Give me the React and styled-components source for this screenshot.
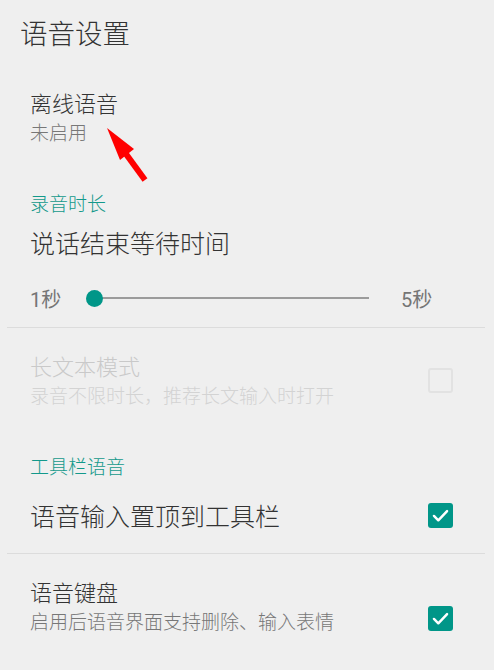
import React from "react";
import styled, { createGlobalStyle } from "styled-components";

const GlobalStyle = createGlobalStyle`
  html, body {
    margin: 0;
    padding: 0;
    background: #efefef;
  }
  body {
    font-family: "Noto Sans CJK SC", "Noto Sans", sans-serif;
    font-weight: 300;
    color: #333;
  }
`;

const Page = styled.div`
  width: 494px;
  min-height: 670px;
  background: #efefef;
  overflow: hidden;
`;

const Header = styled.h1`
  margin: 0;
  height: 65px;
  line-height: 65px;
  padding-left: 20px;
  font-size: 27.5px;
  font-weight: 300;
  color: #333;
`;

const Category = styled.div`
  padding: 20px 0 0 30px;
  line-height: 28px;
  font-size: 19px;
  color: #13998b;
`;

const Item = styled.div`
  position: relative;
  display: flex;
  align-items: center;
  padding: ${(p) => (p.$single ? "18px 41px 21px 30px" : "23px 41px 23px 30px")};
`;

const ItemText = styled.div`
  flex: 1;
`;

const Title = styled.div`
  font-size: ${(p) => (p.$big ? "25px" : "22px")};
  line-height: ${(p) => (p.$big ? "34px" : "29px")};
  color: ${(p) => (p.$disabled ? "#c9c9c9" : "#333")};
`;

const Summary = styled.div`
  font-size: 19px;
  line-height: 29px;
  color: ${(p) => (p.$disabled ? "#d3d3d3" : "#777")};
`;

const PlainTitle = styled(Title)`
  padding: 8px 0 0 30px;
`;

const SliderRow = styled.div`
  display: flex;
  align-items: center;
  height: 38px;
  margin-top: 20px;
  padding-left: 30px;
`;

const SliderLabel = styled.span`
  font-family: Roboto, "Noto Sans CJK SC", sans-serif;
  font-weight: 400;
  font-size: 20px;
  color: #757575;
  width: ${(p) => p.$w || "auto"};
`;

const Track = styled.div`
  position: relative;
  width: 275px;
  height: 2px;
  margin: 0 32px 0 8px;
  background: #9b9b9b;
`;

const Thumb = styled.div`
  position: absolute;
  left: -8px;
  top: -7.5px;
  width: 17px;
  height: 17px;
  border-radius: 50%;
  background: #009688;
`;

const Divider = styled.hr`
  margin: ${(p) => p.$top || 0}px 9px 0 7px;
  border: 0;
  height: 1px;
  background: #dcdcdc;
`;

const Box = styled.div`
  flex: none;
  width: 25px;
  height: 25px;
  box-sizing: border-box;
  border-radius: 3px;
  display: flex;
  align-items: center;
  justify-content: center;
  margin-top: ${(p) => p.$offset || 0}px;
  background: ${(p) => (p.$checked ? "#009688" : "transparent")};
  border: ${(p) => (p.$checked ? "none" : "2px solid #e2e2e2")};
`;

const Arrow = styled.svg`
  position: absolute;
  left: 100px;
  top: 55px;
`;

function CheckBox({ checked, offset }) {
  return (
    <Box $checked={checked} $offset={offset}>
      {checked && (
        <svg width="21" height="21" viewBox="0 0 24 24">
          <path
            d="M4.5 12.5 L9.5 17.5 L19.5 7"
            fill="none"
            stroke="#fff"
            strokeWidth="2.8"
            strokeLinecap="round"
            strokeLinejoin="round"
          />
        </svg>
      )}
    </Box>
  );
}

export default function App() {
  return (
    <Page>
      <GlobalStyle />
      <Header>语音设置</Header>

      <Item>
        <ItemText>
          <Title>离线语音</Title>
          <Summary>未启用</Summary>
        </ItemText>
        <Arrow width="60" height="70" viewBox="0 0 60 70">
          <line x1="26" y1="34" x2="45" y2="60" stroke="#ff0000" strokeWidth="6" />
          <polygon points="7,8 34,29 20,40" fill="#ff0000" />
        </Arrow>
      </Item>

      <Category>录音时长</Category>
      <PlainTitle $big>说话结束等待时间</PlainTitle>
      <SliderRow>
        <SliderLabel $w="56px">1秒</SliderLabel>
        <Track>
          <Thumb />
        </Track>
        <SliderLabel>5秒</SliderLabel>
      </SliderRow>
      <Divider $top={10} />

      <Item>
        <ItemText>
          <Title $disabled>长文本模式</Title>
          <Summary $disabled>录音不限时长，推荐长文输入时打开</Summary>
        </ItemText>
        <CheckBox />
      </Item>

      <Category>工具栏语音</Category>
      <Item $single>
        <ItemText>
          <Title $big>语音输入置顶到工具栏</Title>
        </ItemText>
        <CheckBox checked />
      </Item>
      <Divider />
      <Item>
        <ItemText>
          <Title>语音键盘</Title>
          <Summary>启用后语音界面支持删除、输入表情</Summary>
        </ItemText>
        <CheckBox checked offset={24} />
      </Item>
    </Page>
  );
}
